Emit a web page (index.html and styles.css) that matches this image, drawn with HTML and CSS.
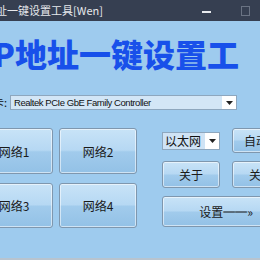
FILE: index.html
```html
<!DOCTYPE html>
<html lang="zh">
<head>
<meta charset="utf-8">
<link rel="stylesheet" href="styles.css">
</head>
<body>
<div class="window">
  <div class="titlebar">
    <span class="title">址一键设置工具[Wen]</span>
    <span class="controls">
      <span class="min"></span>
      <span class="max"></span>
    </span>
  </div>
  <div class="heading">P地址一键设置工</div>
  <div class="adapter-row">
    <span class="label">卡:</span>
    <div class="select">
      <span class="select-text">Realtek PCIe GbE Family Controller</span>
      <span class="arrow"><svg width="7" height="4" viewBox="0 0 7 4"><path d="M0 0H7L3.5 4Z" fill="#222"/></svg></span>
    </div>
  </div>
  <div class="main">
    <div class="nets">
      <button class="btn">网络1</button>
      <button class="btn">网络2</button>
      <button class="btn">网络3</button>
      <button class="btn">网络4</button>
    </div>
    <div class="side">
      <div class="combo">
        <span class="combo-text">以太网</span>
        <span class="arrow"><svg width="7" height="4" viewBox="0 0 7 4"><path d="M0 0H7L3.5 4Z" fill="#222"/></svg></span>
      </div>
      <button class="btn auto">自动</button>
      <button class="btn">关于</button>
      <button class="btn">关闭</button>
      <button class="btn wide">设置══»</button>
    </div>
  </div>
</div>
</body>
</html>
```
FILE: styles.css
```css
html, body {
  margin: 0;
  padding: 0;
  width: 260px;
  height: 260px;
  overflow: hidden;
  background: #9ecbee;
}
.window {
  height: 258px;
  border-bottom: 2px solid #b8c4cf;
  background: #9ecbee;
  font-family: "Noto Sans CJK SC", "DejaVu Sans", sans-serif;
}
.titlebar {
  height: 21px;
  background: #363f51;
  display: flex;
  align-items: center;
  overflow: hidden;
}
.title {
  margin-left: -4px;
  color: #e6e8ec;
  font-size: 11px;
  line-height: 21px;
  white-space: nowrap;
}
.controls {
  margin-left: auto;
  display: flex;
  align-items: center;
  gap: 30px;
  margin-right: 10px;
}
.min {
  width: 9px;
  height: 2px;
  background: #e8eaee;
  margin-top: 2px;
}
.max {
  width: 7px;
  height: 8px;
  border: 1px solid #6a7383;
}
.heading {
  margin: 14px 0 0 -7px;
  font-size: 32px;
  line-height: 36px;
  height: 36px;
  font-weight: 900;
  color: #1850ea;
  white-space: nowrap;
}
.adapter-row {
  margin-top: 24px;
  display: flex;
  align-items: center;
  height: 15px;
}
.label {
  margin-left: -7px;
  width: 17px;
  font-size: 11px;
  line-height: 15px;
  color: #111;
  white-space: nowrap;
  overflow: hidden;
}
.select {
  width: 227px;
  height: 15px;
  box-sizing: border-box;
  border: 1px solid #8ea7be;
  background: #d3e6f6;
  display: flex;
  align-items: center;
}
.select-text {
  flex: 1;
  padding-left: 3px;
  font-family: "Liberation Sans", Arial, sans-serif;
  font-size: 9.5px;
  letter-spacing: -0.45px;
  color: #111;
  white-space: nowrap;
  overflow: hidden;
}
.arrow {
  width: 14px;
  align-self: stretch;
  background: #fff;
  display: flex;
  align-items: center;
  justify-content: center;
}
.main {
  margin-top: 18px;
  display: flex;
}
.nets {
  margin-left: -25px;
  display: grid;
  grid-template-columns: 78px 78px;
  grid-template-rows: 46px 45px;
  column-gap: 6px;
  row-gap: 9px;
}
.btn {
  margin: 0;
  padding: 0;
  box-sizing: border-box;
  border: 1px solid #7f97ae;
  border-radius: 3px;
  box-shadow: inset 0 0 0 1px rgba(255, 255, 255, 0.55);
  background: linear-gradient(#c8e3f7 0%, #b6d8f3 48%, #a1cbec 52%, #93c1e6 100%);
  font-family: "Noto Sans CJK SC", sans-serif;
  font-size: 12px;
  color: #1a1a1a;
  white-space: nowrap;
}
.side {
  margin-left: 25px;
  display: grid;
  grid-template-columns: 58px 58px;
  grid-template-rows: 25px 27px 31px;
  column-gap: 12px;
  row-gap: 8px;
  align-items: stretch;
}
.combo {
  align-self: center;
  height: 18px;
  box-sizing: border-box;
  border: 1px solid #8ea7be;
  background: #cfe3f5;
  display: flex;
  align-items: center;
}
.combo-text {
  flex: 1;
  padding-left: 2px;
  font-size: 12px;
  color: #111;
  white-space: nowrap;
}
.auto {
  width: 48px;
}
.wide {
  grid-column: 1 / span 2;
}
```
